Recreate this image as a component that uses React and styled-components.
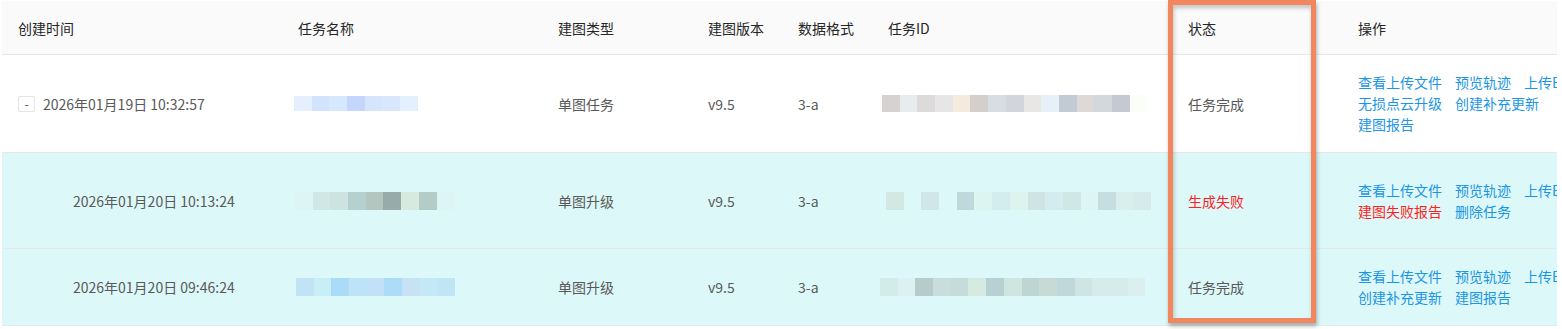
import React from "react";
import styled, { createGlobalStyle } from "styled-components";

const colors = {
  headerBg: "#fafafa",
  line: "#e8e8e8",
  childBg: "#ddf8f8",
  head: "#262626",
  text: "#595959",
  link: "#1b95e4",
  danger: "#ff1f1f",
  mark: "#f2865e",
};

const GlobalStyle = createGlobalStyle`
  html, body {
    margin: 0;
    background: #fff;
  }
  body {
    font-family: "Noto Sans CJK SC", "Noto Sans", sans-serif;
    font-size: 14px;
  }
`;

const Page = styled.div`
  position: relative;
  width: 1562px;
  height: 329px;
  padding: 1px 5px 0 2px;
  box-sizing: border-box;
  overflow: hidden;
`;

const Table = styled.div`
  overflow: hidden;
`;

const columns = "280px 260px 150px 90px 90px 300px 170px 1fr";

const HeaderRow = styled.div`
  display: grid;
  grid-template-columns: ${columns};
  height: 53px;
  background: ${colors.headerBg};
  border-bottom: 1px solid ${colors.line};
`;

const HeadCell = styled.div`
  display: flex;
  align-items: center;
  padding-left: 16px;
  color: ${colors.head};
  white-space: nowrap;
`;

const BodyRow = styled.div`
  display: grid;
  grid-template-columns: ${columns};
  height: ${(props) => props.height}px;
  background: ${(props) => (props.child ? colors.childBg : "#fff")};
  border-bottom: 1px solid ${colors.line};
`;

const Cell = styled.div`
  display: flex;
  align-items: center;
  padding-left: ${(props) => props.indent || 16}px;
  color: ${(props) => (props.danger ? colors.danger : colors.text)};
  white-space: nowrap;
  overflow: hidden;
  min-width: 0;
`;

const ExpandButton = styled.span`
  width: 15px;
  height: 14px;
  margin-right: 8px;
  border: 1px solid #e3e3e3;
  border-radius: 2px;
  background: #fff;
  display: flex;
  align-items: center;
  justify-content: center;
  font-size: 12px;
  line-height: 1;
  color: #555;
`;

const Mosaic = styled.div`
  display: flex;
  height: ${(props) => props.h}px;
  margin-left: ${(props) => props.shift}px;
`;

const Tile = styled.span`
  width: ${(props) => props.w}px;
  height: 100%;
  flex: none;
`;

const Actions = styled.div`
  display: flex;
  flex-direction: column;
  line-height: 21px;
`;

const ActionLine = styled.div`
  display: flex;
  gap: 13px;
  white-space: nowrap;
`;

const ActionLink = styled.a`
  color: ${(props) => (props.danger ? colors.danger : colors.link)};
  text-decoration: none;
  cursor: pointer;
`;

const Highlight = styled.div`
  position: absolute;
  left: 1168px;
  top: 0;
  width: 148px;
  height: 323px;
  box-sizing: border-box;
  border: 5px solid ${colors.mark};
  box-shadow: 1px 3px 4px rgba(0, 0, 0, 0.3), inset 1px 3px 4px rgba(0, 0, 0, 0.22);
  pointer-events: none;
`;

const headers = ["创建时间", "任务名称", "建图类型", "建图版本", "数据格式", "任务ID", "状态", "操作"];

const rows = [
  {
    height: 97,
    child: false,
    time: "2026年01月19日 10:32:57",
    type: "单图任务",
    status: "任务完成",
    name: {
      h: 15, w: 17.7, shift: -4,
      tiles: ["#e6effe", "#d4e3fd", "#d6e8fd", "#c4d6fb", "#d6e4fc", "#dae6fc", "#e4f0fd"],
    },
    id: {
      h: 17, w: 17.7, shift: -6,
      tiles: ["#d6d2d1", "#e6edec", "#dddbda", "#e6e6e6", "#f4ebde", "#d5cfcc", "#d6dee4", "#d3d5dc",
        "#e8e7e5", "#e6f0f9", "#c2cbd3", "#dcd9d6", "#d3d8dc", "#c3cad4", "#fbfdf9"],
    },
    actions: [
      [{ t: "查看上传文件" }, { t: "预览轨迹" }, { t: "上传Excel文件" }],
      [{ t: "无损点云升级" }, { t: "创建补充更新" }],
      [{ t: "建图报告" }],
    ],
  },
  {
    height: 95,
    child: true,
    time: "2026年01月20日 10:13:24",
    type: "单图升级",
    status: "生成失败",
    danger: true,
    name: {
      h: 18, w: 17.7, shift: -3,
      tiles: ["#def5f5", "#cfe8e6", "#cde3df", "#b5d1cf", "#b3c6bf", "#98abab", "#d7eae0", "#b4ccc8", "#def5f5"],
    },
    id: {
      h: 18, w: 17.7, shift: -2,
      tiles: ["#d3e8e3", "transparent", "#cfe7e8", "transparent", "#bed8dc", "#dcf5f0", "#d3ecee", "#dcf3ee",
        "#cfe5e4", "#d3ecee", "#cfe8e6", "#def5f5", "#c5dfe0", "#d9efee", "#d6ecea"],
    },
    actions: [
      [{ t: "查看上传文件" }, { t: "预览轨迹" }, { t: "上传Excel文件" }],
      [{ t: "建图失败报告", danger: true }, { t: "删除任务" }],
    ],
  },
  {
    height: 76,
    child: true,
    time: "2026年01月20日 09:46:24",
    type: "单图升级",
    status: "任务完成",
    name: {
      h: 18, w: 17.7, shift: -2,
      tiles: ["#c2e2f6", "#c8eef6", "#aadbf7", "#bce3f6", "#c3e1f6", "#acdcf8", "#c8e2f5", "#c4e8f6", "#c0e6f6"],
    },
    id: {
      h: 18, w: 17.7, shift: -8,
      tiles: ["#d2ece8", "#dcf1f2", "#b6ccca", "#c9dedc", "#c6dcd9", "#d5ebe2", "#b7d1d3", "#cfe6e0",
        "#bed6d2", "#c8dad6", "#bed8dc", "#cfe5e4", "#d6ecea", "#d6ecea", "#dbf0ee"],
    },
    actions: [
      [{ t: "查看上传文件" }, { t: "预览轨迹" }, { t: "上传Excel文件" }],
      [{ t: "创建补充更新" }, { t: "建图报告" }],
    ],
  },
];

const Blur = ({ data }) => (
  <Mosaic h={data.h} shift={data.shift}>
    {data.tiles.map((c, i) => (
      <Tile key={i} w={data.w} style={{ background: c }} />
    ))}
  </Mosaic>
);

const App = () => {
  return (
    <Page>
      <GlobalStyle />
      <Table>
        <HeaderRow>
          {headers.map((h) => (
            <HeadCell key={h}>{h}</HeadCell>
          ))}
        </HeaderRow>
        {rows.map((r, idx) => (
          <BodyRow key={idx} height={r.height} child={r.child}>
            <Cell indent={r.child ? 71 : 16}>
              {!r.child && <ExpandButton>-</ExpandButton>}
              {r.time}
            </Cell>
            <Cell>
              <Blur data={r.name} />
            </Cell>
            <Cell>{r.type}</Cell>
            <Cell>v9.5</Cell>
            <Cell>3-a</Cell>
            <Cell>
              <Blur data={r.id} />
            </Cell>
            <Cell danger={r.danger}>{r.status}</Cell>
            <Cell>
              <Actions>
                {r.actions.map((line, i) => (
                  <ActionLine key={i}>
                    {line.map((a) => (
                      <ActionLink key={a.t} danger={a.danger}>
                        {a.t}
                      </ActionLink>
                    ))}
                  </ActionLine>
                ))}
              </Actions>
            </Cell>
          </BodyRow>
        ))}
      </Table>
      <Highlight />
    </Page>
  );
};

export default App;
